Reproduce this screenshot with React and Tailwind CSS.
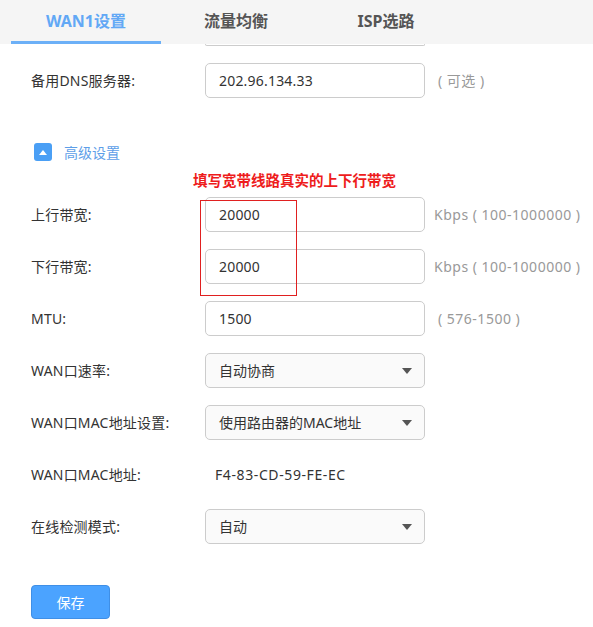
const font = { fontFamily: '"Noto Sans", "Noto Sans CJK SC", sans-serif' };

function Field({ label, value, hint, hintClass = 'ml-[9px]', className = '' }) {
  return (
    <div className={`flex items-center h-[35px] ${className}`}>
      <div className="w-[174px] text-[14px] text-[#333] tracking-[0.2px]">{label}</div>
      <div className="w-[220px] h-[35px] border border-[#ccc] rounded-[5px] bg-white flex items-center pl-[13px] text-[14px] text-[#333] tracking-[0.2px]">
        {value}
      </div>
      {hint && <div className={`${hintClass} text-[14px] text-[#999] tracking-[0.5px]`}>{hint}</div>}
    </div>
  );
}

function Select({ label, value, className = '' }) {
  return (
    <div className={`flex items-center h-[35px] ${className}`}>
      <div className="w-[174px] text-[14px] text-[#333] tracking-[0.2px]">{label}</div>
      <div className="w-[220px] h-[35px] border border-[#ccc] rounded-[5px] bg-[#fafafa] flex items-center justify-between pl-[13px] pr-[12px] text-[14px] text-[#333]">
        <span>{value}</span>
        <svg width="10" height="6" viewBox="0 0 10 6"><path d="M0 0h10L5 6z" fill="#555" /></svg>
      </div>
    </div>
  );
}

export default function App() {
  const tabs = ['WAN1设置', '流量均衡', 'ISP选路'];
  return (
    <div className="w-[593px] h-[627px] bg-white overflow-hidden" style={font}>
      <div className="h-[44px] bg-[#f5f5f5] flex pl-[11px]">
        {tabs.map((t, i) => (
          <div key={t} className={`w-[150px] flex items-center justify-center pb-[3px] text-[16px] font-bold relative ${i === 0 ? 'text-[#62a8f5]' : 'text-[#555]'}`}>
            {t}
            {i === 0 && <div className="absolute left-0 right-0 bottom-0 h-[3px] bg-[#6cb0f7]" />}
          </div>
        ))}
      </div>

      <div className="pl-[31px]">
        <div className="ml-[174px] w-[220px] h-[2px] border-x border-b border-[#ccc] rounded-b-[5px]" />

        <Field className="mt-[17px]" label="备用DNS服务器:" value="202.96.134.33" hint="( 可选 )" hintClass="ml-[13px]" />

        <div className="flex items-center mt-[45px] ml-[3px] h-[18px]">
          <div className="w-[18px] h-[18px] rounded-[3px] bg-[#4a9ff5] flex items-center justify-center">
            <svg width="8" height="5" viewBox="0 0 8 5"><path d="M4 0l4 5H0z" fill="#fff" /></svg>
          </div>
          <span className="ml-[12px] text-[14px] text-[#5d9ee8]">高级设置</span>
        </div>

        <div className="mt-[9px] ml-[162px] h-[20px] leading-[20px] text-[14.5px] font-bold text-[#ee1c1c]">
          填写宽带线路真实的上下行带宽
        </div>

        <div className="relative">
          <Field className="mt-[7px]" label="上行带宽:" value="20000" hint="Kbps ( 100-1000000 )" />
          <Field className="mt-[17px]" label="下行带宽:" value="20000" hint="Kbps ( 100-1000000 )" />
          <div className="absolute left-[169px] top-[3px] w-[97px] h-[96px] border border-[#e02020]" />
        </div>

        <Field className="mt-[17px]" label="MTU:" value="1500" hint="( 576-1500 )" hintClass="ml-[13px]" />
        <Select className="mt-[17px]" label="WAN口速率:" value="自动协商" />
        <Select className="mt-[17px]" label="WAN口MAC地址设置:" value="使用路由器的MAC地址" />

        <div className="flex items-center h-[35px] mt-[17px] text-[14px] text-[#333]">
          <div className="w-[184px] tracking-[0.2px]">WAN口MAC地址:</div>
          <div className="tracking-[0.6px]">F4-83-CD-59-FE-EC</div>
        </div>

        <Select className="mt-[17px]" label="在线检测模式:" value="自动" />

        <button className="mt-[41px] w-[79px] h-[34px] rounded-[4px] bg-[#4ba3ff] border border-[#3f8fe6] text-white text-[14px]">
          保存
        </button>
      </div>
    </div>
  );
}
